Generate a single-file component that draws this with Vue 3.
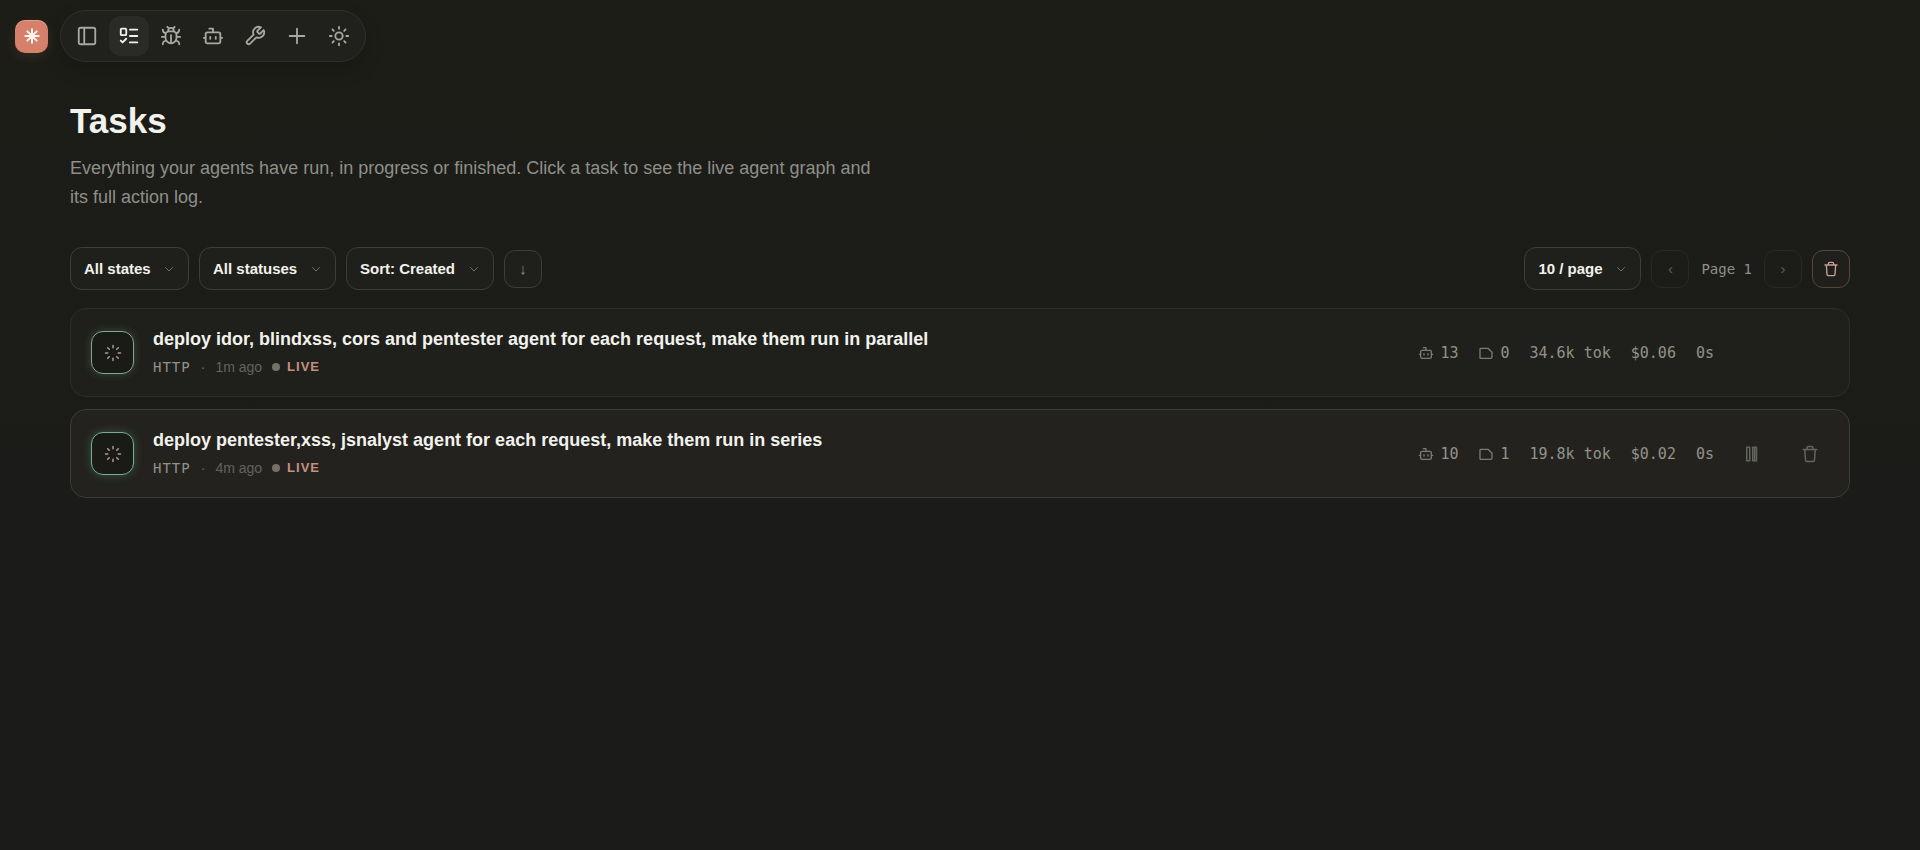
<script setup>
import { ref } from 'vue'

/* -------------------------
   ICONS (24 x 24 outlines)
------------------------- */
const icons = {
  panel: 'M5 3h14a2 2 0 0 1 2 2v14a2 2 0 0 1-2 2H5a2 2 0 0 1-2-2V5a2 2 0 0 1 2-2zM9 3v18',
  tasks: 'M4 4h4a1 1 0 0 1 1 1v5a1 1 0 0 1-1 1H4a1 1 0 0 1-1-1V5a1 1 0 0 1 1-1zM3 17l2 2 4-4M13 5h8M13 12h8M13 19h8',
  bug: 'M8 2l1.88 1.88M14.12 3.88L16 2M9 7.13v-1a3 3 0 1 1 6 0v1M12 20c-3.3 0-6-2.7-6-6v-3a4 4 0 0 1 4-4h4a4 4 0 0 1 4 4v3c0 3.3-2.7 6-6 6M12 20v-9M6.53 9C4.6 8.8 3 7.1 3 5M6 13H2M3 21c0-2.1 1.7-3.9 3.8-4M20.97 5c0 2.1-1.6 3.8-3.5 4M22 13h-4M17.2 17c2.1.1 3.8 1.9 3.8 4',
  bot: 'M12 8V4H8M6 8h12a2 2 0 0 1 2 2v8a2 2 0 0 1-2 2H6a2 2 0 0 1-2-2v-8a2 2 0 0 1 2-2zM2 14h2M20 14h2M15 13v2M9 13v2',
  wrench: 'M14.7 6.3a1 1 0 0 0 0 1.4l1.6 1.6a1 1 0 0 0 1.4 0l3.77-3.77a6 6 0 0 1-7.94 7.94l-6.91 6.91a2.12 2.12 0 0 1-3-3l6.91-6.91a6 6 0 0 1 7.94-7.94l-3.76 3.76z',
  plus: 'M4 12h16M12 4v16',
  sun: 'M16 12a4 4 0 1 1-8 0 4 4 0 0 1 8 0zM12 2v2M12 20v2M4.93 4.93l1.41 1.41M17.66 17.66l1.41 1.41M2 12h2M20 12h2M6.34 17.66l-1.41 1.41M19.07 4.93l-1.41 1.41',
  chevron: 'M5 9l7 7 7-7',
  trash: 'M3 6h18M5 6l1 14a2 2 0 0 0 2 2h8a2 2 0 0 0 2-2l1-14M8 6V4a2 2 0 0 1 2-2h4a2 2 0 0 1 2 2v2',
  loader: 'M12 2v3M12 19v3M4.93 4.93l2.1 2.1M16.97 16.97l2.1 2.1M2 12h3M19 12h3M4.93 19.07l2.1-2.1M16.97 7.03l2.1-2.1',
  note: 'M4 5h11l6 6v7a2 2 0 0 1-2 2H4a1 1 0 0 1-1-1V6a1 1 0 0 1 1-1z',
  pause: 'M5 3h4v18H5zM13 3h5v18h-5zM15.5 3v18'
}

const navItems = [
  { id: 'panel', label: 'Toggle sidebar' },
  { id: 'tasks', label: 'Tasks' },
  { id: 'bug', label: 'Findings' },
  { id: 'bot', label: 'Agents' },
  { id: 'wrench', label: 'Tools' },
  { id: 'plus', label: 'New task' },
  { id: 'sun', label: 'Toggle theme' }
]
const activeNav = ref('tasks')

/* -------------------------
   FILTERS
------------------------- */
const filters = ref([
  { id: 'state', label: 'State', value: 'All states', options: ['All states', 'Active', 'Archived'] },
  { id: 'status', label: 'Status', value: 'All statuses', options: ['All statuses', 'Running', 'Finished'] },
  { id: 'sort', label: 'Sort by', value: 'Sort: Created', options: ['Sort: Created', 'Sort: Cost'] }
])
const pageSize = ref('10 / page')
const descending = ref(true)

/* -------------------------
   TASKS
------------------------- */
const tasks = [
  { id: 1, title: 'deploy idor, blindxss, cors and pentester agent for each request, make them run in parallel', type: 'HTTP', age: '1m ago', agents: 13, notes: 0, tokens: '34.6k tok', cost: '$0.06', time: '0s', hovered: false },
  { id: 2, title: 'deploy pentester,xss, jsnalyst agent for each request, make them run in series', type: 'HTTP', age: '4m ago', agents: 10, notes: 1, tokens: '19.8k tok', cost: '$0.02', time: '0s', hovered: true }
]
</script>

<template>
  <div class="app">
    <!-- TOP BAR -->
    <header class="topbar">
      <a href="#" class="logo" aria-label="Home">
        <svg viewBox="0 0 24 24" class="logo-mark">
          <path d="M12 2v20M2 12h20M5 5l14 14M19 5L5 19" />
        </svg>
      </a>
      <nav class="nav">
        <button
          v-for="item in navItems"
          :key="item.id"
          class="nav-btn"
          :class="{ active: activeNav === item.id }"
          :aria-label="item.label"
          @click="activeNav = item.id"
        >
          <svg viewBox="0 0 24 24" class="icon icon-lg"><path :d="icons[item.id]" /></svg>
        </button>
      </nav>
    </header>

    <main class="main">
      <h1>Tasks</h1>
      <p class="lead">
        Everything your agents have run, in progress or finished. Click a task to see the live agent graph and its full action log.
      </p>

      <!-- TOOLBAR -->
      <div class="toolbar">
        <div class="group">
          <label v-for="f in filters" :key="f.id" class="select">
            <select v-model="f.value" :aria-label="f.label">
              <option v-for="o in f.options" :key="o">{{ o }}</option>
            </select>
            <svg viewBox="0 0 24 24" class="icon chevron"><path :d="icons.chevron" /></svg>
          </label>
          <button class="square" aria-label="Sort direction" @click="descending = !descending">
            {{ descending ? '↓' : '↑' }}
          </button>
        </div>

        <div class="group">
          <label class="select">
            <select v-model="pageSize" aria-label="Page size">
              <option>10 / page</option>
              <option>20 / page</option>
              <option>50 / page</option>
            </select>
            <svg viewBox="0 0 24 24" class="icon chevron"><path :d="icons.chevron" /></svg>
          </label>
          <button class="square" disabled aria-label="Previous page">‹</button>
          <span class="page">Page 1</span>
          <button class="square" disabled aria-label="Next page">›</button>
          <button class="square danger" aria-label="Delete all tasks">
            <svg viewBox="0 0 24 24" class="icon icon-sm"><path :d="icons.trash" /></svg>
          </button>
        </div>
      </div>

      <!-- TASK LIST -->
      <div class="list">
        <article v-for="task in tasks" :key="task.id" class="task" :class="{ hovered: task.hovered }">
          <div class="status">
            <svg viewBox="0 0 24 24" class="icon icon-md"><path :d="icons.loader" /></svg>
          </div>
          <div class="body">
            <h2>{{ task.title }}</h2>
            <div class="meta">
              <span class="type">{{ task.type }}</span>
              <span class="sep">·</span>
              <span class="age">{{ task.age }}</span>
              <span class="live">LIVE</span>
            </div>
          </div>
          <div class="stats">
            <span class="stat">
              <svg viewBox="0 0 24 24" class="icon icon-sm"><path :d="icons.bot" /></svg>{{ task.agents }}
            </span>
            <span class="stat">
              <svg viewBox="0 0 24 24" class="icon icon-sm"><path :d="icons.note" /></svg>{{ task.notes }}
            </span>
            <span>{{ task.tokens }}</span>
            <span>{{ task.cost }}</span>
            <span>{{ task.time }}</span>
          </div>
          <div class="actions">
            <button aria-label="Pause task">
              <svg viewBox="0 0 24 24" class="icon icon-md"><path :d="icons.pause" /></svg>
            </button>
            <button aria-label="Delete task">
              <svg viewBox="0 0 24 24" class="icon icon-md"><path :d="icons.trash" /></svg>
            </button>
          </div>
        </article>
      </div>
    </main>
  </div>
</template>

<style>
body {
  background: #1b1b19;
}
</style>

<style scoped>
.app {
  min-height: 100vh;
  box-sizing: border-box;
  background: linear-gradient(#1c1d17, #1b1b19 60%);
  color: #f2f2ed;
  font-family: "Liberation Sans", Arial, sans-serif;
}

.app * {
  box-sizing: border-box;
}

button,
select {
  font: inherit;
  color: inherit;
  margin: 0;
  padding: 0;
  border: none;
  background: none;
  cursor: pointer;
}

.icon {
  display: block;
  flex: none;
  fill: none;
  stroke: currentColor;
  stroke-width: 2;
  stroke-linecap: round;
  stroke-linejoin: round;
}

.icon-lg {
  width: 22px;
  height: 22px;
}

.icon-md {
  width: 18px;
  height: 18px;
}

.icon-sm {
  width: 16px;
  height: 16px;
}

/* TOP BAR */
.topbar {
  display: flex;
  align-items: center;
  gap: 12px;
  padding: 10px 15px 0;
}

.logo {
  display: flex;
  align-items: center;
  justify-content: center;
  width: 33px;
  height: 33px;
  border-radius: 10px;
  background: #d6806c;
  box-shadow: 0 4px 12px rgba(214, 128, 108, 0.12), inset 0 1px 0 rgba(255, 255, 255, 0.25);
}

.logo-mark {
  width: 16px;
  height: 16px;
  fill: none;
  stroke: #fbf3ee;
  stroke-width: 3;
  stroke-linecap: round;
}

.nav {
  display: flex;
  gap: 2px;
  padding: 5px 6px;
  border: 1px solid #30312b;
  border-radius: 26px;
  background: #20211c;
  box-shadow: 0 8px 20px rgba(0, 0, 0, 0.15);
}

.nav-btn {
  display: flex;
  align-items: center;
  justify-content: center;
  width: 40px;
  height: 40px;
  border-radius: 12px;
  color: #a8a8a0;
}

.nav-btn.active {
  background: #2a2b27;
  color: #f2f2ed;
}

/* PAGE HEADING */
.main {
  padding: 39px 70px;
}

h1 {
  margin: 0 0 13px;
  font-size: 35px;
  line-height: 40px;
}

.lead {
  max-width: 820px;
  margin: 0 0 35px;
  font-size: 18px;
  line-height: 29px;
  color: #8f8f89;
}

/* TOOLBAR */
.toolbar {
  display: flex;
  justify-content: space-between;
  align-items: center;
  margin-bottom: 18px;
}

.group {
  display: flex;
  align-items: center;
  gap: 10px;
}

.select {
  display: grid;
  align-items: center;
}

.select select {
  grid-area: 1 / 1;
  appearance: none;
  height: 43px;
  padding: 0 37px 0 13px;
  border: 1px solid #3d3e38;
  border-radius: 12px;
  background: #1f201b;
  font-size: 15px;
  font-weight: 700;
}

.chevron {
  grid-area: 1 / 1;
  justify-self: end;
  width: 12px;
  height: 12px;
  margin-right: 14px;
  color: #6f6f69;
  pointer-events: none;
}

.square {
  display: flex;
  align-items: center;
  justify-content: center;
  width: 38px;
  height: 38px;
  border: 1px solid #3d3e38;
  border-radius: 11px;
  background: #1f201b;
  font-size: 15px;
  color: #8f8f89;
}

.square:disabled {
  border-color: #282924;
  background: none;
  color: #5f5f5a;
  cursor: default;
}

.square.danger {
  border-color: #59453f;
  color: #c9a097;
}

.page {
  padding: 0 2px;
  font-family: "DejaVu Sans Mono", monospace;
  font-size: 14px;
  color: #8f8f89;
}

/* TASK LIST */
.list {
  display: flex;
  flex-direction: column;
  gap: 12px;
}

.task {
  display: flex;
  align-items: center;
  gap: 19px;
  padding: 19px 20px;
  border: 1px solid #2c2d28;
  border-radius: 16px;
  background: #1f201b;
}

.task.hovered {
  border-color: #3b3b37;
  background: #23221f;
}

.status {
  display: flex;
  align-items: center;
  justify-content: center;
  width: 43px;
  height: 43px;
  border: 1px solid #86a592;
  border-radius: 12px;
  background: #1a1b17;
  box-shadow: 0 0 8px rgba(134, 165, 146, 0.3);
  color: #b39a8f;
}

.hovered .status {
  border-color: #74b18d;
  box-shadow: 0 0 10px rgba(90, 180, 125, 0.35);
}

.body {
  flex: 1;
  min-width: 0;
}

h2 {
  margin: 0 0 6px;
  font-size: 18px;
  line-height: 23px;
}

.meta {
  display: flex;
  align-items: center;
  gap: 10px;
  font-size: 14px;
  line-height: 20px;
  color: #63635e;
}

.type,
.stats {
  font-family: "DejaVu Sans Mono", monospace;
  color: #92928b;
}

.type {
  letter-spacing: 1px;
}

.live {
  display: flex;
  align-items: center;
  gap: 7px;
  font-size: 13px;
  font-weight: 700;
  letter-spacing: 1px;
  color: #c58f82;
}

.live::before {
  content: "";
  width: 8px;
  height: 8px;
  border-radius: 50%;
  background: #75706a;
}

.stats {
  display: flex;
  align-items: center;
  gap: 20px;
  font-size: 15px;
}

.stat {
  display: flex;
  align-items: center;
  gap: 6px;
}

.stat .icon {
  color: #7b7b75;
}

.actions {
  display: flex;
  gap: 20px;
  opacity: 0;
}

.actions button {
  display: flex;
  align-items: center;
  justify-content: center;
  width: 38px;
  height: 38px;
  color: #65655f;
}

.hovered .actions,
.task:hover .actions {
  opacity: 1;
}
</style>
